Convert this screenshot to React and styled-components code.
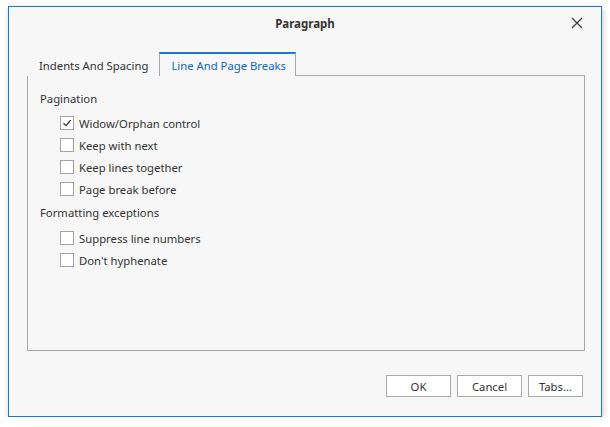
import React from 'react';
import styled, { createGlobalStyle } from 'styled-components';

const Global = createGlobalStyle`
  html, body {
    margin: 0;
    background: #fff;
  }
  body {
    font-family: "Noto Sans", "Open Sans", sans-serif;
    font-size: 11.3px;
    color: #333;
  }
`;

const Window = styled.div`
  box-sizing: border-box;
  margin: 6px 0 0 8px;
  width: 594px;
  height: 411px;
  border: 1px solid #1a78cf;
  background: #f7f7f7;
  box-shadow: 1px 2px 6px rgba(0, 0, 0, 0.22);
  display: flex;
  flex-direction: column;
`;

const TitleBar = styled.div`
  position: relative;
  height: 32px;
  display: flex;
  align-items: center;
  justify-content: center;
  font-weight: bold;
  font-size: 11.5px;
  color: #333;
`;

const Close = styled.button`
  position: absolute;
  right: 16px;
  top: 8px;
  width: 16px;
  height: 16px;
  padding: 0;
  border: none;
  background: none;
  display: flex;
  align-items: center;
  justify-content: center;
`;

const Body = styled.div`
  flex: 1;
  display: flex;
  flex-direction: column;
  padding: 13px 16px 0 18px;
`;

const Tabs = styled.div`
  display: flex;
  height: 24px;
  position: relative;
  z-index: 1;
  margin-bottom: -1px;
`;

const Tab = styled.div`
  box-sizing: border-box;
  padding: ${p => (p.$active ? '1px 9px 0 11px' : '1px 10px 0 11px')};
  display: flex;
  align-items: center;
  color: ${p => (p.$active ? '#1068c0' : '#333')};
  background: #f7f7f7;
  border: 1px solid ${p => (p.$active ? '#a8a8a8' : 'transparent')};
  border-top: 2px solid ${p => (p.$active ? '#1a78cf' : 'transparent')};
  border-bottom: none;
`;

const Panel = styled.div`
  box-sizing: border-box;
  height: 276px;
  border: 1px solid #a8a8a8;
  padding: 12px 12px;
  display: flex;
  flex-direction: column;
`;

const Group = styled.div`
  height: 20px;
  display: flex;
  align-items: center;
  margin-top: ${p => (p.$later ? 2 : 0)}px;
  margin-bottom: ${p => (p.$later ? 5 : 4)}px;
`;

const Row = styled.label`
  height: 22px;
  display: flex;
  align-items: center;
  padding-left: 20px;
  gap: 5px;
`;

const Box = styled.span`
  box-sizing: border-box;
  width: 14px;
  height: 14px;
  border: 1px solid #a3a3a3;
  background: #fff;
  display: flex;
  align-items: center;
  justify-content: center;
`;

const Footer = styled.div`
  display: flex;
  justify-content: flex-end;
  gap: 6px;
  padding: 24px 2px 0 0;
`;

const Button = styled.button`
  box-sizing: border-box;
  width: ${p => p.$w}px;
  height: 22px;
  border: 1px solid #a8a8a8;
  background: #fff;
  font-family: inherit;
  font-size: 11.3px;
  color: #333;
  padding: 0;
`;

const Check = ({ checked, children }) => (
  <Row>
    <Box>
      {checked && (
        <svg width="10" height="10" viewBox="0 0 10 10">
          <path d="M1.5 5.2 L4 7.6 L8.6 2.2" fill="none" stroke="#333" strokeWidth="1.3" />
        </svg>
      )}
    </Box>
    {children}
  </Row>
);

export default function App() {
  return (
    <>
      <Global />
      <Window>
        <TitleBar>
          Paragraph
          <Close>
            <svg width="12" height="12" viewBox="0 0 12 12">
              <path d="M1 1 L11 11 M11 1 L1 11" stroke="#444" strokeWidth="1.4" />
            </svg>
          </Close>
        </TitleBar>
        <Body>
          <Tabs>
            <Tab>Indents And Spacing</Tab>
            <Tab $active>Line And Page Breaks</Tab>
          </Tabs>
          <Panel>
            <Group>Pagination</Group>
            <Check checked>Widow/Orphan control</Check>
            <Check>Keep with next</Check>
            <Check>Keep lines together</Check>
            <Check>Page break before</Check>
            <Group $later>Formatting exceptions</Group>
            <Check>Suppress line numbers</Check>
            <Check>Don't hyphenate</Check>
          </Panel>
          <Footer>
            <Button $w={65}>OK</Button>
            <Button $w={65}>Cancel</Button>
            <Button $w={55}>Tabs...</Button>
          </Footer>
        </Body>
      </Window>
    </>
  );
}
